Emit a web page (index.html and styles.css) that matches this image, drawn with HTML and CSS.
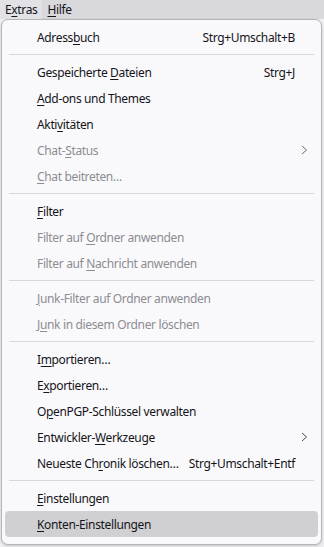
FILE: index.html
```html
<html>
  <head>
    <meta charset="utf-8">
    <link rel="stylesheet" href="styles.css">
  </head>
  <body>
    <div class="menubar">
      <span class="top-item active">E<u>x</u>tras</span>
      <span class="top-item"><u>H</u>ilfe</span>
    </div>
    <div class="popup">
      <div class="row"><span>Adress<u>b</u>uch</span><span class="key">Strg+Umschalt+B</span></div>
      <div class="sep"></div>
      <div class="row"><span>Gespeicherte <u>D</u>ateien</span><span class="key">Strg+J</span></div>
      <div class="row"><span><u>A</u>dd-ons und Themes</span></div>
      <div class="row"><span>Akti<u>v</u>itäten</span></div>
      <div class="row off"><span>Chat-<u>S</u>tatus</span><span class="arrow"><svg width="7" height="10" viewBox="0 0 7 10"><path d="M1 1 L5.5 5 L1 9" fill="none" stroke="#6b6b70" stroke-width="1"/></svg></span></div>
      <div class="row off"><span><u>C</u>hat beitreten…</span></div>
      <div class="sep"></div>
      <div class="row"><span><u>F</u>ilter</span></div>
      <div class="row off"><span>Filter auf <u>O</u>rdner anwenden</span></div>
      <div class="row off"><span>Filter auf <u>N</u>achricht anwenden</span></div>
      <div class="sep"></div>
      <div class="row off"><span><u>J</u>unk-Filter auf Ordner anwenden</span></div>
      <div class="row off"><span>J<u>u</u>nk in diesem Ordner löschen</span></div>
      <div class="sep"></div>
      <div class="row"><span>I<u>m</u>portieren…</span></div>
      <div class="row"><span>E<u>x</u>portieren…</span></div>
      <div class="row"><span>O<u>p</u>enPGP-Schlüssel verwalten</span></div>
      <div class="row"><span>Entwickler-<u>W</u>erkzeuge</span><span class="arrow"><svg width="7" height="10" viewBox="0 0 7 10"><path d="M1 1 L5.5 5 L1 9" fill="none" stroke="#4a4a4f" stroke-width="1"/></svg></span></div>
      <div class="row"><span>Neueste Ch<u>r</u>onik löschen…</span><span class="key">Strg+Umschalt+Entf</span></div>
      <div class="sep"></div>
      <div class="row"><span><u>E</u>instellungen</span></div>
      <div class="row hover"><span><u>K</u>onten-Einstellungen</span></div>
    </div>
  </body>
</html>
```

FILE: styles.css
```css
html, body {padding: 0; margin: 0}
body {
  background: #f0f0f4;
  font-family: "Noto Sans", "DejaVu Sans", sans-serif;
  font-size: 12px;
  letter-spacing: -0.35px;
  color: #15141a;
}
u {
  text-decoration-thickness: 1px;
  text-underline-offset: 2px;
}
.menubar {
  display: flex;
  height: 19px;
  background: #d9d9dd;
  align-items: center;
}
.top-item {
  padding: 0 5px;
  line-height: 19px;
}
.top-item.active {
  background: #e2e2e6;
}
.popup {
  margin: 0 2px 0 1px;
  height: 515px;
  padding: 4px 3px 5px 3px;
  background: #f9f9fb;
  border: 1px solid #b4b4b9;
  border-radius: 7px;
  box-shadow: 0 1px 3px rgba(0,0,0,0.18);
}
.row {
  display: flex;
  align-items: center;
  justify-content: space-between;
  height: 26px;
  padding: 0 23px 0 32px;
  border-radius: 4px;
  white-space: nowrap;
}
.row.off {
  color: #8c8c92;
}
.row.hover {
  background: #d0d0d3;
}
.key {
  margin-left: 8px;
}
.arrow {
  display: flex;
  margin-right: -13px;
}
.sep {
  height: 1px;
  margin: 4px 4px 4px 4px;
  background: #d8d8dc;
}
```
